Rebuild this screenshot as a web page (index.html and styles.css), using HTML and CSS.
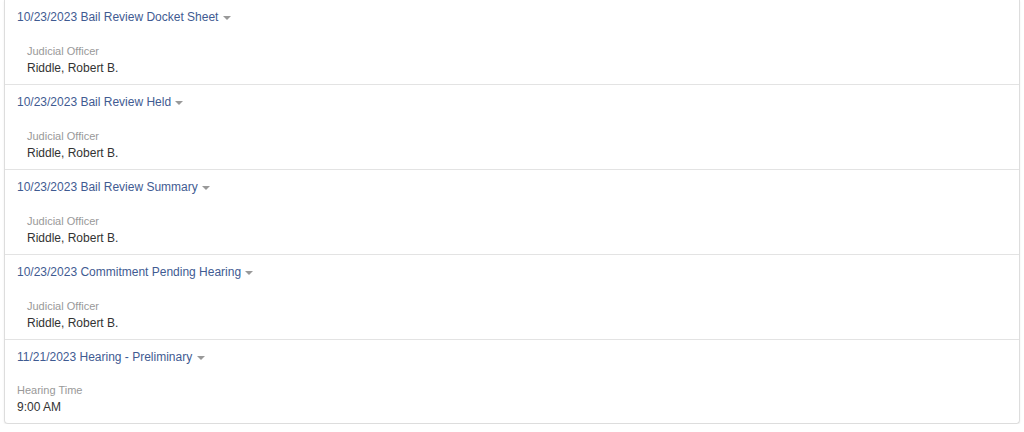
FILE: index.html
```html
<!DOCTYPE html>
<html>
<head lang="en">
    <meta charset="UTF-8">
    <title>Events</title>
    <link rel="stylesheet" href="styles.css">
</head>
<body>
    <div id="events">
        <div class="event">
            <a class="event-title">10/23/2023 Bail Review Docket Sheet <span class="caret"></span></a>
            <div class="event-body indent">
                <div class="label">Judicial Officer</div>
                <div class="value">Riddle, Robert B.</div>
            </div>
        </div>
        <div class="event">
            <a class="event-title">10/23/2023 Bail Review Held <span class="caret"></span></a>
            <div class="event-body indent">
                <div class="label">Judicial Officer</div>
                <div class="value">Riddle, Robert B.</div>
            </div>
        </div>
        <div class="event">
            <a class="event-title">10/23/2023 Bail Review Summary <span class="caret"></span></a>
            <div class="event-body indent">
                <div class="label">Judicial Officer</div>
                <div class="value">Riddle, Robert B.</div>
            </div>
        </div>
        <div class="event">
            <a class="event-title">10/23/2023 Commitment Pending Hearing <span class="caret"></span></a>
            <div class="event-body indent">
                <div class="label">Judicial Officer</div>
                <div class="value">Riddle, Robert B.</div>
            </div>
        </div>
        <div class="event">
            <a class="event-title">11/21/2023 Hearing - Preliminary <span class="caret"></span></a>
            <div class="event-body">
                <div class="label">Hearing Time</div>
                <div class="value">9:00 AM</div>
            </div>
        </div>
    </div>
</body>
</html>
```

FILE: styles.css
```css
*{
    margin: 0;
    padding: 0;
    box-sizing: border-box;
}
body{
    background: #fff;
    font-family: "Liberation Sans", Arial, sans-serif;
    color: #333;
}
#events{
    margin: 0 4px;
    border: 1px solid #ddd;
    border-top: none;
    border-radius: 0 0 4px 4px;
    box-shadow: 0 1px 2px rgba(0,0,0,0.08);
}
.event{
    padding: 9px 12px 7px;
    border-bottom: 1px solid #e3e3e3;
}
.event:last-child{
    border-bottom: none;
    padding-bottom: 7px;
}
.event-title{
    display: block;
    font-size: 12px;
    line-height: 17px;
    color: #3f5b92;
    cursor: pointer;
}
.caret{
    display: inline-block;
    width: 0;
    height: 0;
    margin-left: 1px;
    vertical-align: middle;
    border-top: 4px solid #999;
    border-left: 4px solid transparent;
    border-right: 4px solid transparent;
}
.event-body{
    margin-top: 17px;
}
.event:last-child .event-body{
    margin-top: 16px;
}
.event-body.indent{
    padding-left: 10px;
}
.label{
    font-size: 11px;
    line-height: 16px;
    color: #999;
}
.value{
    font-size: 12px;
    line-height: 18px;
    color: #333;
}
```
